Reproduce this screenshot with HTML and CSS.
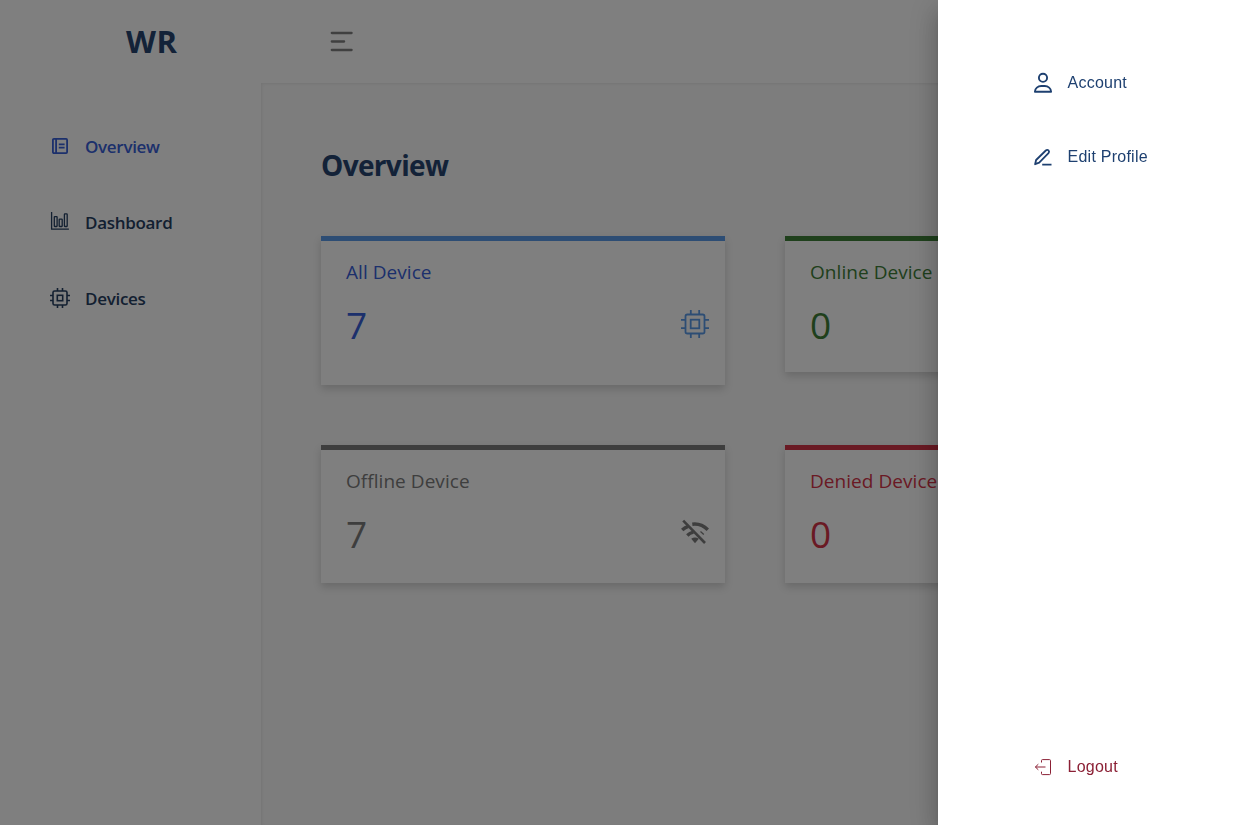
FILE: index.html
```html
<!DOCTYPE html>
<html lang="en">
<head>
<meta charset="utf-8">
<title>WR</title>
<link rel="stylesheet" href="styles.css">
</head>
<body>
<div class="app">
  <aside class="sidebar">
    <div class="logo">WR</div>
    <nav class="nav">
      <a class="nav-item active">
        <svg class="nav-icon" viewBox="0 0 20 20" fill="none" stroke="currentColor" stroke-width="1.8"><rect x="2.9" y="2.9" width="14.2" height="14.2" rx="1"/><path d="M6.1 3v14M8.8 8.3h5.8M8.8 11.6h5.8"/></svg>
        <span class="nav-text">Overview</span>
      </a>
      <a class="nav-item">
        <svg class="nav-icon chart" viewBox="0 0 20 20" fill="none" stroke="currentColor" stroke-width="1.3"><path d="M1.6 1v17.1h17.3"/><rect x="4.3" y="5.6" width="2.8" height="9.9" rx=".5"/><rect x="9.2" y="8.1" width="3" height="7.4" rx=".5"/><rect x="14.4" y="2.9" width="2.8" height="12.6" rx=".5"/></svg>
        <span class="nav-text">Dashboard</span>
      </a>
      <a class="nav-item">
        <svg class="nav-icon" viewBox="0 0 20 20" fill="none" stroke="currentColor" stroke-width="1.6"><rect x="3" y="3" width="14" height="14" rx="1.6"/><rect x="7.3" y="7.3" width="5.4" height="5.4"/><path d="M7.5 0v3M12.5 0v3M7.5 17v3M12.5 17v3M0 7.5h3M0 12.5h3M17 7.5h3M17 12.5h3"/></svg>
        <span class="nav-text">Devices</span>
      </a>
    </nav>
  </aside>
  <div class="main">
    <header class="header">
      <svg class="menu" viewBox="0 0 24 22" fill="none" stroke="currentColor" stroke-width="2.3" stroke-linecap="round"><path d="M1.8 3h19.8M1.8 11.5h12.3M1.8 20h19.8"/></svg>
    </header>
    <main class="content">
      <h1 class="title">Overview</h1>
      <div class="cards">
        <section class="card all">
          <h2 class="card-title">All Device</h2>
          <div class="card-row"><span class="count">7</span><svg class="card-icon chip" viewBox="0 0 28 28" fill="none" stroke="currentColor" stroke-width="1.8"><rect x="4.5" y="4.5" width="19" height="19" rx="1.8"/><rect x="9.7" y="9.7" width="8.6" height="8.6"/><path d="M9.8 0v4.5M18.2 0v4.5M9.8 23.5V28M18.2 23.5V28M0 9.8h4.5M0 18.2h4.5M23.5 9.8H28M23.5 18.2H28"/></svg></div>
        </section>
        <section class="card online">
          <h2 class="card-title">Online Device</h2>
          <div class="card-row"><span class="count">0</span></div>
        </section>
        <section class="card offline">
          <h2 class="card-title">Offline Device</h2>
          <div class="card-row"><span class="count">7</span>
            <svg class="card-icon" viewBox="0 0 28 28" fill="none" stroke="currentColor" stroke-width="3.4"><path d="M11.3 5.2Q20 4 26.8 10.8M1.2 11Q3.5 8.8 7.2 7.4M6.3 16.5Q8.7 14.1 12.4 13.2"/><path d="M19.5 12.6l3.3 2.9" stroke-width="1.3"/><path d="M2.2 1.6l21.8 22.4" stroke-width="2.6"/><path d="M10.2 19.8Q14 17.3 17.8 19.8L14 24.2z" fill="currentColor" stroke="none"/></svg>
          </div>
        </section>
        <section class="card denied">
          <h2 class="card-title">Denied Device</h2>
          <div class="card-row"><span class="count">0</span></div>
        </section>
      </div>
    </main>
  </div>
</div>
<div class="backdrop"></div>
<aside class="drawer">
  <a class="drawer-item">
    <svg class="drawer-icon" viewBox="0 0 20 22" fill="none" stroke="currentColor" stroke-width="1.9"><circle cx="10" cy="5.8" r="4.1"/><path d="M1.9 19.7C1.9 16.4 5 14 8.2 14h3.6c3.2 0 6.3 2.4 6.3 5.7z" stroke-linejoin="round"/></svg>
    <span>Account</span>
  </a>
  <a class="drawer-item">
    <svg class="drawer-icon" viewBox="0 0 20 22" fill="none" stroke="currentColor" stroke-width="1.8" stroke-linejoin="round"><path d="M2.1 18.2l1-4.2L12.8 4.5Q14.2 3.2 15.5 4.4Q16.7 5.7 15.5 7.2L6.2 16.7zM9.2 18.7h9.3"/></svg>
    <span>Edit Profile</span>
  </a>
  <a class="drawer-item logout">
    <svg class="drawer-icon exit" viewBox="0 0 20 22" fill="none" stroke="currentColor" stroke-width="1"><path d="M8.5 6.5V4.5q0-.9 1-.9h7q1 0 1 1v13q0 1-1 1h-7q-1 0-1-.9v-2M2.3 11h10.2M5.3 8.2L2.4 11l2.9 2.8"/></svg>
    <span>Logout</span>
  </a>
</aside>
</body>
</html>
```
FILE: styles.css
```css
* { box-sizing: border-box; }
body { margin: 0; height: 825px; overflow: hidden; font-family: "Open Sans", "Noto Sans", sans-serif; color: #264570; background: #fff; }
.app { display: flex; width: 1250px; height: 825px; }
.sidebar { width: 261px; flex: none; }
.logo { height: 83px; padding-left: 126px; line-height: 83px; font-size: 31px; font-weight: 700; letter-spacing: .5px; color: #264570; }
.nav { display: flex; flex-direction: column; gap: 52px; padding: 51px 0 0 50px; }
.nav-item { display: flex; align-items: center; gap: 15px; height: 24px; color: #264063; font-size: 17px; font-weight: 600; letter-spacing: -.3px; }
.nav-item.active { color: #3860d8; }
.nav-icon { width: 20px; height: 20px; }
.chart { margin-top: -2px; }
.main { flex: 1; min-width: 0; display: flex; flex-direction: column; }
.header { height: 83px; flex: none; padding: 30px 0 0 69px; color: #808080; }
.menu { width: 24px; height: 22px; display: block; }
.content { flex: 1; padding: 62px 0 0 60px; background: #fafafa; box-shadow: inset 1px 1px 3px rgba(0,0,0,.07); }
.title { margin: 0; height: 91px; font-size: 28px; line-height: 40px; font-weight: 700; letter-spacing: -.65px; color: #264570; }
.cards { display: grid; grid-template-columns: 404px 404px; gap: 60px; align-items: start; }
.card { height: 138px; padding: 17px 16.5px 0 25px; border-top: 5px solid; background: #fff; box-shadow: 0 4px 8px rgba(0,0,0,.16); }
.card-title { margin: 0; font-size: 19px; line-height: 28px; font-weight: 400; letter-spacing: .05px; white-space: nowrap; }
.card-row { display: flex; align-items: center; justify-content: space-between; height: 52px; margin-top: 13px; }
.count { font-size: 37px; line-height: 52px; font-weight: 400; }
.card-icon { width: 28px; height: 28px; margin-top: -2px; }
.all { height: 149px; color: #3860d8; border-color: #5a9be8; }
.chip { color: #5a9be8; }
.online { height: 136px; color: #3e8038; border-color: #3e8038; }
.offline { color: #7c7c7c; border-color: #7c7c7c; }
.denied { color: #d43448; border-color: #d43448; }
.backdrop { position: fixed; inset: 0; background: rgba(0,0,0,.5); }
.drawer { position: fixed; top: 0; right: 0; bottom: 0; width: 312px; padding: 71px 0 46px 95px; display: flex; flex-direction: column; gap: 50px; background: #fff; box-shadow: 0 8px 10px -5px rgba(0,0,0,.2), 0 16px 24px 2px rgba(0,0,0,.14), 0 6px 30px 5px rgba(0,0,0,.12); font: 16px/24px "Liberation Sans", Arial, sans-serif; color: #1e4070; }
.drawer-item { display: flex; align-items: center; gap: 14.5px; height: 24px; letter-spacing: .25px; }
.drawer-icon { width: 20px; height: 22px; margin-top: -1px; }
.exit { margin-top: 0; }
.logout { margin-top: auto; color: #8b2035; }
```
